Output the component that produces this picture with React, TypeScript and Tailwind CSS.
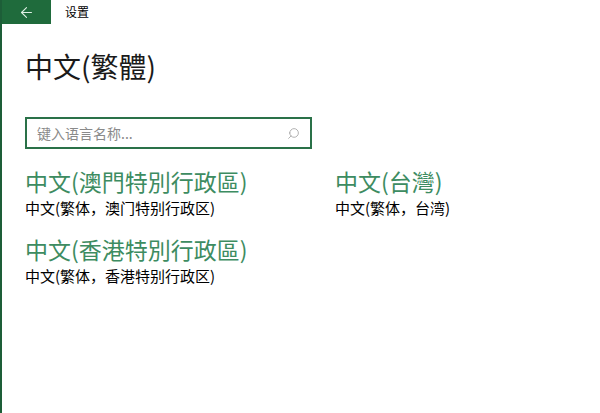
import { ArrowLeft, Search } from 'lucide-react';

const langs = [
  { name: '中文(澳門特別行政區)', desc: '中文(繁体，澳门特别行政区)' },
  { name: '中文(台灣)', desc: '中文(繁体，台湾)' },
  { name: '中文(香港特別行政區)', desc: '中文(繁体，香港特别行政区)' },
];

export default function App() {
  return (
    <div
      className="w-[600px] h-[413px] bg-white border-l-2 border-[#1d5e38] overflow-hidden"
      style={{ fontFamily: '"Noto Sans CJK SC", "Microsoft YaHei", sans-serif' }}
    >
      <div className="flex items-center h-[24px]">
        <div className="w-[49px] h-[24px] bg-[#1f6b3c] flex items-center justify-center">
          <ArrowLeft className="w-[17px] h-[17px] text-[#dff0e4]" strokeWidth={1.5} />
        </div>
        <span className="ml-[14px] text-[12px] text-black leading-none">设置</span>
      </div>

      <div className="pl-[23px] pt-[24px]">
        <h1 className="text-[28px] leading-[36px] text-[#1a1a1a] font-normal">中文(繁體)</h1>

        <div className="mt-[33px] w-[287px] h-[32px] border-2 border-[#2a7148] flex items-center px-[10px] justify-between">
          <span className="text-[14px] text-[#8a8a8a]">键入语言名称...</span>
          <Search className="w-[13px] h-[13px] text-[#a0a0a0] -scale-x-100" strokeWidth={1.5} />
        </div>

        <div className="mt-[18px] grid grid-cols-[310px_1fr] gap-y-[17px]">
          {langs.map(l => (
            <div key={l.name} className="flex flex-col gap-[3px]">
              <p className="text-[23px] leading-[28px] text-[#3d8c61]">{l.name}</p>
              <p className="text-[15px] leading-[20px] text-black">{l.desc}</p>
            </div>
          ))}
        </div>
      </div>
    </div>
  );
}
